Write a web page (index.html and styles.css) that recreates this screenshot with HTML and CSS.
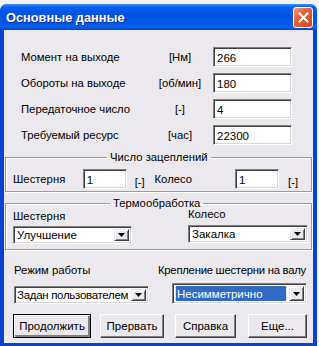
FILE: index.html
```html
<!DOCTYPE html>
<html lang="ru">
<head>
    <meta charset="UTF-8">
    <meta name="viewport" content="width=device-width, initial-scale=1.0">
    <title>Основные данные</title>
    <link rel="stylesheet" href="styles.css">
</head>
<body>
    <div class="window">
        <div class="titlebar">
            <span class="title">Основные данные</span>
            <span class="close">
                <svg width="13" height="13" viewBox="0 0 13 13"><path d="M2.5 2.5 L10.5 10.5 M10.5 2.5 L2.5 10.5" stroke="#fff" stroke-width="2" stroke-linecap="square"/></svg>
            </span>
        </div>
        <div class="content">
            <div class="params">
                <span class="label">Момент на выходе</span><span class="unit">[Нм]</span><input class="field wide" value="266">
                <span class="label">Обороты на выходе</span><span class="unit">[об/мин]</span><input class="field wide" value="180">
                <span class="label">Передаточное число</span><span class="unit">[-]</span><input class="field wide" value="4">
                <span class="label">Требуемый ресурс</span><span class="unit">[час]</span><input class="field wide" value="22300">
            </div>

            <fieldset class="group mesh">
                <legend>Число зацеплений</legend>
                <div class="mesh-row">
                    <span class="mesh-label">Шестерня</span>
                    <input class="field small" value="1">
                    <span class="mesh-unit">[-]</span>
                    <span class="mesh-label wheel">Колесо</span>
                    <input class="field small" value="1">
                    <span class="mesh-unit">[-]</span>
                </div>
            </fieldset>

            <fieldset class="group heat">
                <legend>Термообработка</legend>
                <div class="heat-row">
                    <div class="heat-col">
                        <span class="heat-label">Шестерня</span>
                        <div class="combo heat-combo">
                            <span class="combo-text">Улучшение</span>
                            <span class="combo-btn"><svg width="7" height="4" viewBox="0 0 7 4"><path d="M0 0 H7 L3.5 4 Z" fill="#000"/></svg></span>
                        </div>
                    </div>
                    <div class="heat-col right">
                        <span class="heat-label">Колесо</span>
                        <div class="combo heat-combo">
                            <span class="combo-text">Закалка</span>
                            <span class="combo-btn"><svg width="7" height="4" viewBox="0 0 7 4"><path d="M0 0 H7 L3.5 4 Z" fill="#000"/></svg></span>
                        </div>
                    </div>
                </div>
            </fieldset>

            <div class="modes">
                <div class="mode-col">
                    <span class="mode-label">Режим работы</span>
                    <div class="combo mode-combo">
                        <span class="combo-text tight">Задан пользователем</span>
                        <span class="combo-btn"><svg width="7" height="4" viewBox="0 0 7 4"><path d="M0 0 H7 L3.5 4 Z" fill="#000"/></svg></span>
                    </div>
                </div>
                <div class="mode-col right">
                    <span class="mode-label tight">Крепление шестерни на валу</span>
                    <div class="combo mode-combo focused">
                        <span class="combo-text"><span class="selected">Несимметрично</span></span>
                        <span class="combo-btn"><svg width="7" height="4" viewBox="0 0 7 4"><path d="M0 0 H7 L3.5 4 Z" fill="#000"/></svg></span>
                    </div>
                </div>
            </div>

            <div class="actions">
                <button class="btn default btn-go">Продолжить</button>
                <button class="btn btn-stop">Прервать</button>
                <button class="btn btn-help">Справка</button>
                <button class="btn btn-more">Еще...</button>
            </div>
        </div>
    </div>
</body>
</html>
```

FILE: styles.css
```css
* {
    box-sizing: border-box;
}
body {
    margin: 0;
    background-color: #f2f2f2;
    font-family: "Liberation Sans", Arial, sans-serif;
    font-size: 11.3px;
    color: #000;
}
.window {
    width: 317px;
    margin-top: 4px;
    background-color: #0842d0;
    border-radius: 7px 7px 0 0;
    overflow: hidden;
    padding-bottom: 3px;
}
.titlebar {
    height: 26px;
    display: flex;
    align-items: center;
    justify-content: space-between;
    padding: 0 4px 0 6px;
    background: linear-gradient(to bottom, #3d95ff 0%, #0a5fef 12%, #0054e3 40%, #0058ea 75%, #0a62f4 88%, #0043c6 100%);
}
.title {
    color: #fff;
    font-weight: bold;
    font-size: 12.8px;
    text-shadow: 1px 1px 0 #0a2a8a;
}
.close {
    width: 20px;
    height: 21px;
    border: 1px solid #fff;
    border-radius: 3px;
    background: linear-gradient(135deg, #f19a7c 0%, #e2623c 40%, #cc4a22 100%);
    display: flex;
    align-items: center;
    justify-content: center;
}
.content {
    margin: 0 4px;
    height: 313px;
    background-color: #ebe9ed;
    overflow: hidden;
}

/* sunken edit fields */
.field {
    height: 20px;
    margin: 0;
    padding: 1px 3px 0;
    font-family: inherit;
    font-size: 11.5px;
    color: #000;
    background-color: #fff;
    border: 1px solid;
    border-color: #808080 #fff #fff #808080;
    box-shadow: inset 1px 1px 0 #404040, inset -1px -1px 0 #d8d6dc;
    outline: none;
}

.params {
    display: grid;
    grid-template-columns: 130px 50px 79px;
    column-gap: 4px;
    row-gap: 6px;
    align-items: center;
    padding: 17px 0 0 17px;
}
.unit {
    text-align: center;
}
.field.wide {
    width: 79px;
    margin-left: 4px;
}

/* group boxes */
.group {
    margin: 6px 1px 0;
    border: 1px solid #9a98a0;
    box-shadow: 1px 1px 0 #fff, inset 1px 1px 0 #fff;
    padding: 5px 3px 2px 7px;
    min-width: 0;
}
.group legend {
    line-height: 13px;
    padding: 0 3px;
}
.mesh legend {
    margin-left: 94px;
}
.heat {
    margin-top: 5px;
    padding: 0 3px 5px 7px;
}
.heat legend {
    margin-left: 97px;
}

.mesh-row {
    display: flex;
    align-items: center;
}
.mesh-label {
    width: 70px;
}
.mesh-label.wheel {
    width: 81px;
}
.field.small {
    width: 44px;
}
.mesh-unit {
    width: 20px;
    margin-left: 8px;
    align-self: flex-end;
    line-height: 13px;
}
.mesh-unit:last-child {
    margin-left: 9px;
}

.heat-row {
    display: flex;
}
.heat-col {
    display: flex;
    flex-direction: column;
    width: 119px;
}
.heat-col.right {
    width: 120px;
    margin-left: 56px;
}
.heat-label {
    line-height: 13px;
}
.heat-col.right .heat-label {
    margin-top: -2px;
}
.heat-combo {
    margin-top: 3px;
    height: 18px;
}
.heat-col.right .heat-combo {
    margin-top: 4px;
}

/* combo boxes */
.combo {
    display: flex;
    align-items: stretch;
    background-color: #fff;
    border: 1px solid;
    border-color: #808080 #fff #fff #808080;
    box-shadow: inset 1px 1px 0 #404040, inset -1px -1px 0 #d8d6dc;
    padding: 2px;
}
.combo-text {
    flex: 1;
    display: flex;
    align-items: center;
    padding-left: 1px;
    font-size: 11.5px;
    white-space: nowrap;
    overflow: hidden;
}
.combo-text.tight {
    letter-spacing: -0.3px;
    padding-left: 0;
}
.combo-btn {
    width: 15px;
    display: flex;
    align-items: center;
    justify-content: center;
    background-color: #ebe9ed;
    border: 1px solid;
    border-color: #ebe9ed #404040 #404040 #ebe9ed;
    box-shadow: inset 1px 1px 0 #fff, inset -1px -1px 0 #808080;
}

.modes {
    display: flex;
    padding: 14px 0 0 10px;
}
.mode-col {
    display: flex;
    flex-direction: column;
    width: 135px;
}
.mode-col.right {
    width: 149px;
    margin-left: 9px;
}
.mode-label {
    line-height: 13px;
    white-space: nowrap;
}
.mode-label.tight {
    letter-spacing: -0.25px;
}
.mode-combo {
    margin-top: 9px;
    height: 18px;
}
.mode-col.right .mode-combo {
    margin-top: 6px;
    margin-left: 14px;
    height: 21px;
}
.focused .combo-text {
    padding: 0 3px 0 1px;
}
.selected {
    display: flex;
    align-items: center;
    width: 100%;
    height: 100%;
    padding-left: 1px;
    color: #fff;
    background-color: #316ac5;
    outline: 1px dotted #e8d060;
}

/* buttons */
.actions {
    display: flex;
    padding: 10px 0 0 9px;
}
.btn {
    height: 24px;
    margin: 0;
    padding: 0;
    font-family: inherit;
    font-size: 11.5px;
    color: #000;
    background-color: #ebe9ed;
    border: 1px solid;
    border-color: #fff #404040 #404040 #fff;
    box-shadow: inset -1px -1px 0 #808080;
}
.btn.default {
    border-color: #000;
    box-shadow: inset 1px 1px 0 #fff, inset -2px -2px 0 #808080;
}
.btn-go {
    width: 78px;
}
.btn-stop {
    width: 64px;
    margin-left: 9px;
}
.btn-help {
    width: 61px;
    margin-left: 11px;
}
.btn-more {
    width: 59px;
    margin-left: 12px;
}
```
